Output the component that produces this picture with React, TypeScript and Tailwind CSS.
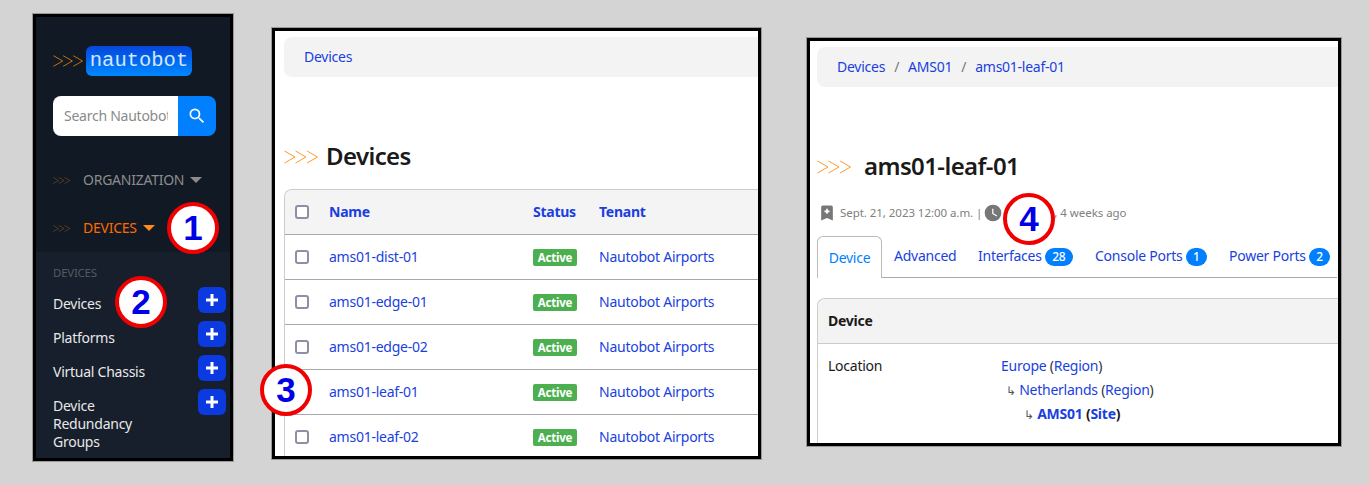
import React from "react";

const Chevrons = ({ className }: { className: string }) => (
  <svg viewBox="0 0 34 14" fill="none" stroke="currentColor" strokeWidth="1" className={className}>
    <path d="M0.5 1 L11 7 L0.5 13" />
    <path d="M11.5 1 L22 7 L11.5 13" />
    <path d="M23 1 L33.5 7 L23 13" />
  </svg>
);

const Callout = ({ n, className }: { n: number; className: string }) => (
  <div
    className={`absolute w-[52px] h-[52px] rounded-full bg-white border-4 border-[#f00000] flex items-center justify-center text-[35px] tracking-normal font-bold text-[#0000e6] font-['Liberation_Sans',sans-serif] ${className}`}
  >
    {n}
  </div>
);

const Caret = ({ color }: { color: string }) => (
  <span className={`ml-[6px] w-0 h-0 border-x-[6px] border-x-transparent border-t-[6px] ${color}`} />
);

const PlusBtn = () => (
  <div className="w-[28px] h-[26px] rounded-md bg-[#0a3ae0] flex items-center justify-center">
    <svg viewBox="0 0 24 24" className="w-[18px] h-[18px] fill-white">
      <path d="M20 14H14V20H10V14H4V10H10V4H14V10H20V14Z" />
    </svg>
  </div>
);

const Sidebar = () => (
  <div className="relative mt-[14px] ml-[33px] w-[200px] h-[447px] border-[3px] border-black outline-1 outline-[#999] bg-[#111924] shrink-0">
    <div className="h-[235px] pt-[29px] pl-[17px]">
      <div className="flex items-center">
        <Chevrons className="w-[30px] h-[14px] text-[#e07b10]" />
        <div className="ml-[3px] w-[106px] h-[30px] rounded-md bg-gradient-to-b from-[#0a45dc] to-[#0088ff] text-[#d6e6ff] text-[20.5px] tracking-normal leading-[29px] text-center font-['Liberation_Mono',monospace]">
          nautobot
        </div>
      </div>
      <div className="flex mt-[20px] w-[163px] h-[40px] rounded-lg overflow-hidden">
        <div className="w-[125px] bg-white pl-[11px] pr-[10px] pb-[2px] flex items-center">
          <span className="block overflow-hidden whitespace-nowrap text-[14px] text-[#8a8a8a]">Search Nautobot</span>
        </div>
        <div className="flex-1 bg-[#007fff] flex items-center justify-center">
          <svg viewBox="0 0 24 24" className="w-[20px] h-[20px] fill-white">
            <path d="M9.5,3A6.5,6.5 0 0,1 16,9.5C16,11.11 15.41,12.59 14.44,13.73L14.71,14H15.5L20.5,19L19,20.5L14,15.5V14.71L13.73,14.44C12.59,15.41 11.11,16 9.5,16A6.5,6.5 0 0,1 3,9.5A6.5,6.5 0 0,1 9.5,3M9.5,5C7,5 5,7 5,9.5C5,12 7,14 9.5,14C12,14 14,12 14,9.5C14,7 12,5 9.5,5Z" />
          </svg>
        </div>
      </div>
      <div className="flex items-center mt-[34px] h-[20px]">
        <Chevrons className="w-[17px] h-[7px] text-[#8a5a20]" />
        <span className="ml-[13px] pb-[2px] text-[14px] text-[#8c8c8c]">ORGANIZATION</span>
        <Caret color="border-t-[#8c8c8c]" />
      </div>
      <div className="flex items-center mt-[28px] h-[20px]">
        <Chevrons className="w-[17px] h-[7px] text-[#8a5a20]" />
        <span className="ml-[13px] pb-[2px] text-[14px] text-[#ff6a00]">DEVICES</span>
        <Caret color="border-t-[#ff8c1a]" />
      </div>
    </div>
    <div className="h-[206px] bg-[#161f2b] pl-[17px] pr-[4px] pt-[14px] relative">
      <div className="text-[11.5px] leading-[14px] text-[#555a60]">DEVICES</div>
      <div className="flex flex-col gap-[8px] mt-[7px]">
        {["Devices", "Platforms", "Virtual Chassis", "Device Redundancy Groups"].map((name) => (
          <div key={name} className="flex justify-between items-start">
            <div className="w-[100px] pt-[8px] text-[14px] leading-[18px] text-[#e8e8e8]">{name}</div>
            <PlusBtn />
          </div>
        ))}
      </div>
    </div>
    <Callout n={1} className="left-[131px] top-[185px]" />
    <Callout n={2} className="left-[79px] top-[259px]" />
  </div>
);

const devices = ["ams01-dist-01", "ams01-edge-01", "ams01-edge-02", "ams01-leaf-01", "ams01-leaf-02"];

const Box = () => <span className="block w-[14px] h-[14px] rounded-[3px] border-2 border-[#8f8fa3] bg-white" />;

const ListPanel = () => (
  <div className="relative mt-[28px] ml-[39px] w-[489px] h-[431px] border-[3px] border-black outline-1 outline-[#999] bg-white shrink-0">
    <div className="h-full overflow-hidden pt-[6px] pl-[9px]">
      <div className="h-[40px] bg-[#f3f3f3] rounded-l-lg pl-[20px] pb-[2px] flex items-center text-[14px] text-[#1a3fe0]">Devices</div>
      <div className="flex items-center mt-[64px] h-[32px]">
        <Chevrons className="w-[34px] h-[14px] text-[#ff9a2e]" />
        <h1 className="ml-[8px] pb-[2px] text-[24px] leading-[32px] font-semibold tracking-[-0.6px] text-[#1a1a1a]">Devices</h1>
      </div>
      <div className="mt-[16px] border-l border-t border-[#ccc] rounded-tl-lg text-[14px]">
        <div className="flex items-center h-[45px] bg-[#f4f4f4] rounded-tl-lg border-b border-[#aaa] font-bold text-[#1a3fe0]">
          <div className="w-[44px] pl-[10px]"><Box /></div>
          <div className="w-[204px] pb-[2px]">Name</div>
          <div className="w-[66px] pb-[2px]">Status</div>
          <div className="pb-[2px]">Tenant</div>
        </div>
        {devices.map((d) => (
          <div key={d} className="flex items-center h-[45px] border-b border-[#aaa] text-[#1a3fe0]">
            <div className="w-[44px] pl-[10px]"><Box /></div>
            <div className="w-[204px] pb-[2px]">{d}</div>
            <div className="w-[66px]">
              <span className="block w-[44px] h-[17px] rounded-[2px] bg-[#4caf50] text-white text-[11.5px] leading-[17px] font-bold text-center">Active</span>
            </div>
            <div className="pb-[2px]">Nautobot Airports</div>
          </div>
        ))}
      </div>
    </div>
    <Callout n={3} className="left-[-15px] top-[333px]" />
  </div>
);

const tabs = [
  { name: "Advanced", w: "w-[84px]" },
  { name: "Interfaces", count: "28", w: "w-[117px]" },
  { name: "Console Ports", count: "1", w: "w-[134px]" },
  { name: "Power Ports", count: "2", w: "" },
];

const DetailPanel = () => (
  <div className="relative mt-[38px] ml-[46px] w-[534px] h-[408px] border-[3px] border-black outline-1 outline-[#999] bg-white shrink-0">
    <div className="h-full overflow-hidden pt-[6px] pl-[7px]">
      <div className="h-[40px] bg-[#f3f3f3] rounded-l-lg pl-[20px] pb-[2px] flex items-center text-[14px] text-[#1a3fe0]">
        <span>Devices</span>
        <span className="mx-[9px] text-[#777]">/</span>
        <span>AMS01</span>
        <span className="mx-[9px] text-[#777]">/</span>
        <span>ams01-leaf-01</span>
      </div>
      <div className="flex items-center mt-[64px] h-[32px]">
        <Chevrons className="w-[34px] h-[14px] text-[#ff9a2e]" />
        <h1 className="ml-[13px] pb-[2px] text-[24px] leading-[32px] font-semibold tracking-[-0.6px] text-[#1a1a1a]">ams01-leaf-01</h1>
      </div>
      <div className="flex items-center mt-[20px] h-[20px] text-[11.5px] tracking-[-0.05px] text-[#808080] whitespace-nowrap">
        <svg viewBox="0 0 24 24" className="w-[20px] h-[20px] fill-[#777]">
          <path d="M17,3A2,2 0 0,1 19,5V21L12,18L5,21V5C5,3.89 5.9,3 7,3H17M11,7V9H9V11H11V13H13V11H15V9H13V7H11Z" />
        </svg>
        <span className="ml-[3px]">Sept. 21, 2023 12:00 a.m. |</span>
        <svg viewBox="0 0 24 24" className="ml-[1px] w-[20px] h-[20px] fill-[#777]">
          <path d="M12,2A10,10 0 0,0 2,12A10,10 0 0,0 12,22A10,10 0 0,0 22,12A10,10 0 0,0 12,2M16.2,16.2L11,13V7H12.5V12.2L17,14.9L16.2,16.2Z" />
        </svg>
        <span className="ml-[51px]">, 4 weeks ago</span>
      </div>
      <div className="flex mt-[13px] h-[42px] border-b border-[#aaa] text-[14px] mr-[1px]">
        <div className="w-[65px] h-[42px] border border-b-0 border-[#bbb] rounded-t-md bg-white text-[#007fff] flex items-center justify-center pb-[1px]">Device</div>
        <div className="flex items-center pl-[12px] text-[#1a3fe0]">
          {tabs.map((t) => (
            <div key={t.name} className={`flex items-center ${t.w}`}>
              <span className="pb-[2px]">{t.name}</span>
              {t.count && (
                <span className="ml-[3px] h-[18px] px-[7.5px] rounded-full bg-[#007fff] text-white text-[12px] font-medium leading-[18px]">{t.count}</span>
              )}
            </div>
          ))}
        </div>
      </div>
      <div className="mt-[20px] border-l border-t border-[#ccc] rounded-tl-lg text-[14px] text-[#1a1a1a] h-[160px]">
        <div className="h-[45px] bg-[#f3f3f3] rounded-tl-lg border-b border-[#ccc] pl-[10px] pb-[1px] flex items-center font-bold">Device</div>
        <div className="flex pl-[10px] pt-[10px]">
          <div className="w-[173px] leading-[24px]">Location</div>
          <div className="leading-[24px]">
            <div className="text-[#1a3fe0]">Europe <span className="text-[#333]">(</span>Region<span className="text-[#333]">)</span></div>
            <div className="pl-[5px] text-[#1a3fe0]"><span className="text-[#555] text-[12px]">↳</span> Netherlands <span className="text-[#333]">(</span>Region<span className="text-[#333]">)</span></div>
            <div className="pl-[23px] -mt-[1px] text-[#1a3fe0] font-bold"><span className="text-[#555] text-[12px] font-normal">↳</span> AMS01 <span className="text-[#1a1a1a]">(</span>Site<span className="text-[#1a1a1a]">)</span></div>
          </div>
        </div>
      </div>
    </div>
    <Callout n={4} className="left-[193px] top-[152px]" />
  </div>
);

export default function App() {
  return (
    <div className="flex items-start w-[1369px] h-[485px] overflow-hidden bg-[#d4d4d4] tracking-[-0.25px] font-['Noto_Sans',sans-serif]">
      <Sidebar />
      <ListPanel />
      <DetailPanel />
    </div>
  );
}
